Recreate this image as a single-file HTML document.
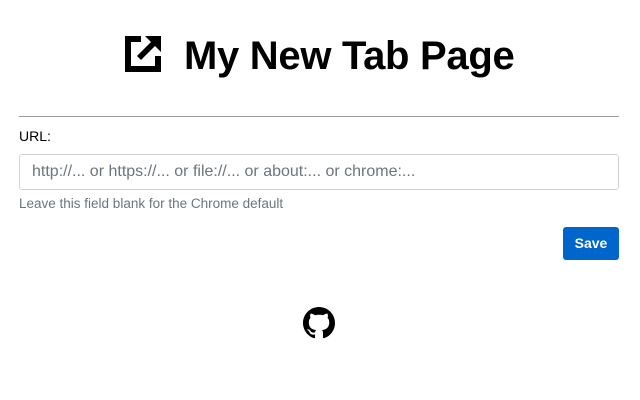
<!DOCTYPE html>
<html><head><style>
body{margin:0;background:#fff;font-family:"Liberation Sans",sans-serif;width:640px;height:400px;position:relative;overflow:hidden}
.a{position:absolute}
</style></head><body>
<svg class="a" style="left:125px;top:36px" width="36" height="36" viewBox="0 0 36 36">
<path d="M0 0H16V6H6V30H30V20H36V36H0Z" fill="#000"/>
<path d="M20 0H36V16L30 10L16 24L12 20L26 6Z" fill="#000"/>
</svg>
<div class="a" style="left:184px;top:31px;font-size:40px;font-weight:bold;line-height:50px;color:#000;letter-spacing:-0.3px">My New Tab Page</div>
<div class="a" style="left:19px;top:116px;width:600px;height:1px;background:#999"></div>
<div class="a" style="left:19px;top:128px;font-size:14px;color:#000">URL:</div>
<div class="a" style="left:19px;top:154px;width:598px;height:34px;border:1px solid #ced4da;border-radius:3px"></div>
<div class="a" style="left:32px;top:163px;font-size:16px;color:#6c757d">http://... or https://... or file://... or about:... or chrome:...</div>
<div class="a" style="left:19px;top:196px;font-size:13.5px;color:#6c757d">Leave this field blank for the Chrome default</div>
<div class="a" style="left:563px;top:227px;width:56px;height:33px;background:#0066cc;border-radius:3px;color:#fff;font-size:14px;font-weight:bold;text-align:center;line-height:33px">Save</div>
<svg class="a" style="left:303px;top:307px" width="32" height="32" viewBox="0 0 16 16"><path fill="#000" d="M8 0C3.58 0 0 3.58 0 8c0 3.54 2.290 6.530 5.470 7.590.4.07.55-.17.55-.38 0-.19-.01-.82-.01-1.49-2.01.37-2.530-.49-2.690-.94-.09-.23-.48-.94-.82-1.130-.28-.15-.68-.52-.01-.53.63-.01 1.080.58 1.230.82.72 1.210 1.870.87 2.330.66.07-.52.28-.87.51-1.070-1.780-.2-3.640-.89-3.640-3.950 0-.87.31-1.590.82-2.150-.08-.2-.36-1.020.08-2.120 0 0 .67-.21 2.200.82.64-.18 1.320-.27 2-.27.68 0 1.360.09 2 .27 1.530-1.040 2.200-.82 2.200-.82.44 1.100.16 1.920.08 2.120.51.56.82 1.270.82 2.150 0 3.070-1.870 3.750-3.650 3.950.29.25.54.73.54 1.480 0 1.070-.01 1.930-.01 2.200 0 .21.15.46.55.38A8.013 8.013 0 0016 8c0-4.420-3.580-8-8-8z"/></svg>
</body></html>
